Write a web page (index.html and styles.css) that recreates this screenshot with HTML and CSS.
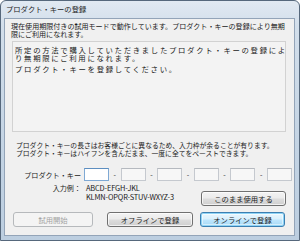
FILE: index.html
```html
<!DOCTYPE html>
<html lang="ja">
<head>
    <meta charset="UTF-8">
    <title>プロダクト・キーの登録</title>
    <link rel="stylesheet" href="styles.css">
</head>
<body>
    <div class="window">
        <div class="titlebar">プロダクト・キーの登録</div>

        <div class="client">
            <p class="intro">現在使用期限付きの試用モードで動作しています。プロダクト・キーの登録により無期<br>限にご利用になれます。</p>

            <div class="message-box">
                <p>所定の方法で購入していただきましたプロダクト・キーの登録によ<br>り無期限にご利用になれます。</p>
                <p class="spaced">プロダクト・キーを登録してください。</p>
            </div>

            <p class="notes">プロダクト・キーの長さはお客様ごとに異なるため、入力枠が余ることが有ります。<br>プロダクト・キーはハイフンを含んだまま、一度に全てをペーストできます。</p>

            <div class="key-row">
                <label class="row-label">プロダクト・キー</label>
                <div class="key-fields">
                    <input class="key-input active" type="text">
                    <span class="dash">-</span>
                    <input class="key-input" type="text">
                    <span class="dash">-</span>
                    <input class="key-input" type="text">
                    <span class="dash">-</span>
                    <input class="key-input" type="text">
                    <span class="dash">-</span>
                    <input class="key-input" type="text">
                    <span class="dash">-</span>
                    <input class="key-input" type="text">
                </div>
            </div>

            <div class="example-row">
                <span class="row-label">入力例：</span>
                <div class="example">ABCD-EFGH-JKL<br>KLMN-OPQR-STUV-WXYZ-3</div>
                <button class="btn continue">このまま使用する</button>
            </div>

            <div class="actions">
                <button class="btn trial" disabled>試用開始</button>
                <button class="btn offline">オフラインで登録</button>
                <button class="btn online default">オンラインで登録</button>
            </div>
        </div>
    </div>
</body>
</html>
```

FILE: styles.css
```css
* {
    box-sizing: border-box;
}
body {
    margin: 0;
    font-family: "Noto Sans CJK JP", "Noto Sans", sans-serif;
    color: #1a1a1a;
    background: #ffffff;
}
.window {
    width: 300px;
    height: 241px;
    display: flex;
    flex-direction: column;
    padding: 0 4px 4px 3px;
    border: 1px solid #56687c;
    border-radius: 6px 6px 0 0;
    background: linear-gradient(180deg, #e1e9f2 0%, #d3dfeb 10%, #c4d4e4 60%, #bccee0 100%);
}
.titlebar {
    height: 17px;
    padding-left: 2px;
    font-size: 7.3px;
    line-height: 16px;
    color: #222;
    white-space: nowrap;
}
.client {
    flex: 1;
    display: flex;
    flex-direction: column;
    padding: 3px 8px 0 7px;
    background: #f0f0f0;
    border: 1px solid #93a4b8;
}
p {
    margin: 0;
}
.intro {
    margin-left: -1px;
    font-size: 7.05px;
    line-height: 8px;
    white-space: nowrap;
}
.message-box {
    height: 91px;
    margin-top: 3px;
    padding: 4px 2px;
    border: 1px solid #d2d2d2;
    background: #f3f3f3;
    font-size: 7.4px;
    line-height: 7.5px;
    letter-spacing: 1.68px;
    white-space: nowrap;
}
.message-box .spaced {
    margin-top: 4px;
}
.notes {
    margin: 9px 0 0 4px;
    font-size: 6.8px;
    line-height: 8px;
    white-space: nowrap;
}
.key-row, .example-row {
    display: grid;
    grid-template-columns: 69px 1fr;
    column-gap: 3px;
}
.key-row {
    margin-top: 11px;
    align-items: center;
}
.row-label {
    text-align: right;
    font-size: 7.1px;
    white-space: nowrap;
}
.key-fields {
    display: flex;
    align-items: center;
}
.key-input {
    width: 25px;
    height: 13px;
    margin: 0;
    padding: 0;
    border: 1px solid #c5c9cf;
    border-top-color: #b5b9bf;
    background: #f7f7f7;
}
.key-input.active {
    background: #ffffff;
    border-color: #7fa9d4;
    border-top-color: #5d8ec0;
}
.dash {
    width: 11.6px;
    text-align: center;
    font-size: 7px;
    line-height: 13px;
}
.example-row {
    grid-template-columns: 69px 1fr 85px;
    margin-top: 2px;
}
.example-row .row-label {
    padding-top: 1px;
    line-height: 9px;
}
.example {
    padding-left: 2px;
    font-size: 7.4px;
    line-height: 9px;
    letter-spacing: -0.15px;
    white-space: nowrap;
}
.btn {
    height: 15px;
    padding: 0;
    font-family: inherit;
    font-size: 7.3px;
    color: #1a1a1a;
    border: 1px solid #707070;
    border-radius: 3px;
    background: linear-gradient(180deg, #f3f3f3 0%, #ebebeb 48%, #dddddd 52%, #cfcfcf 100%);
    box-shadow: inset 0 0 0 1px rgba(255, 255, 255, 0.7);
    white-space: nowrap;
}
.continue {
    margin-top: 8px;
}
.actions {
    display: flex;
    margin-top: 6px;
    margin-left: 1px;
}
.trial {
    width: 80px;
    color: #a3a3a3;
    border-color: #b6b9bc;
    background: #f4f4f4;
    box-shadow: none;
}
.offline {
    width: 86px;
    margin-left: 14px;
}
.online {
    width: 85px;
    margin-left: 7px;
}
.btn.default {
    border-color: #3c7fb1;
    background: linear-gradient(180deg, #eaf6fd 0%, #d9f0fc 48%, #bee6fd 52%, #a7d9f5 100%);
    box-shadow: inset 0 0 0 1px #8ed4f6, inset 0 0 0 2px rgba(255, 255, 255, 0.5);
}
```
